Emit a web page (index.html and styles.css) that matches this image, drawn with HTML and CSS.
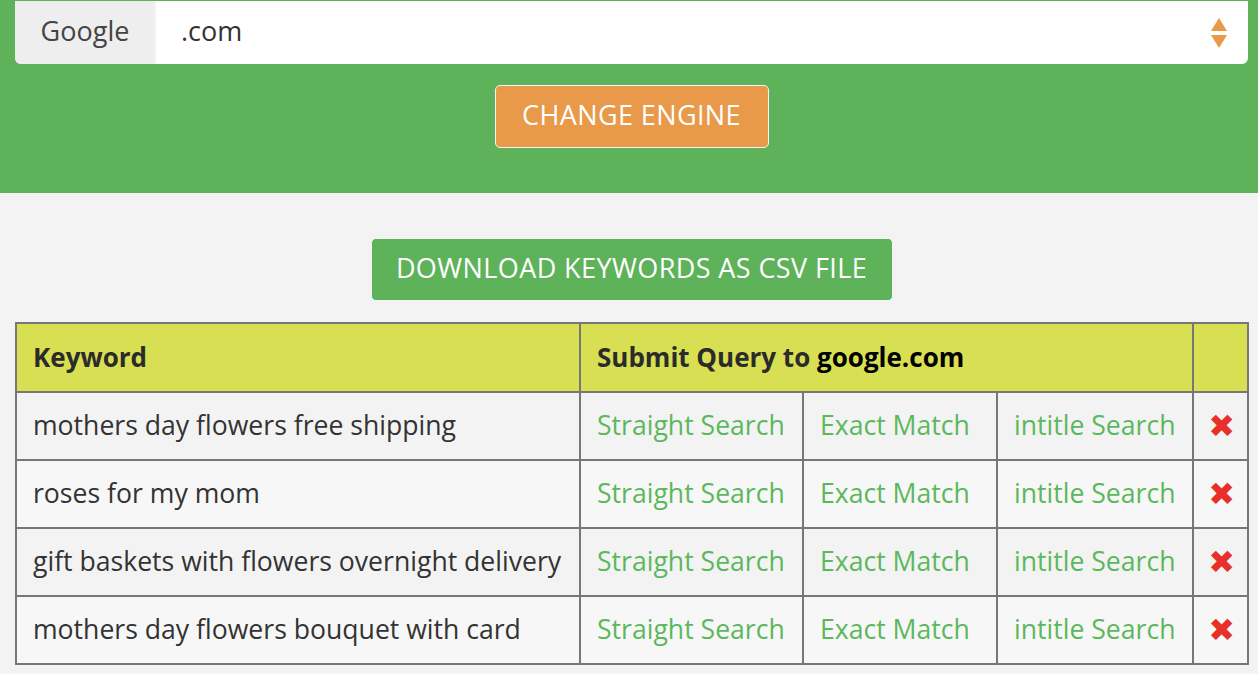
FILE: index.html
```html
<!DOCTYPE html>
<html>
<head>
<meta charset="utf-8">
<link rel="stylesheet" href="styles.css">
</head>
<body>
<header class="top">
  <div class="input-group">
    <span class="addon">Google</span>
    <div class="select">
      <span class="select-value">.com</span>
      <svg class="arrows" width="18" height="32" viewBox="0 0 18 32"><polygon points="9,1 17,14 1,14" fill="#e8994a"/><polygon points="1,18 17,18 9,31" fill="#e8994a"/></svg>
    </div>
  </div>
  <div class="center">
    <button class="btn btn-orange">CHANGE ENGINE</button>
  </div>
</header>
<main class="content">
  <div class="center">
    <button class="btn btn-green">DOWNLOAD KEYWORDS AS CSV FILE</button>
  </div>
  <table class="kw">
    <colgroup>
      <col class="c-kw">
      <col class="c-s">
      <col class="c-e">
      <col class="c-i">
      <col class="c-x">
    </colgroup>
    <thead>
      <tr>
        <th>Keyword</th>
        <th colspan="3">Submit Query to <span class="dark">google.com</span></th>
        <th></th>
      </tr>
    </thead>
    <tbody>
      <tr>
        <td>mothers day flowers free shipping</td>
        <td class="lnk">Straight Search</td>
        <td class="lnk">Exact Match</td>
        <td class="lnk">intitle Search</td>
        <td class="x">✖</td>
      </tr>
      <tr>
        <td>roses for my mom</td>
        <td class="lnk">Straight Search</td>
        <td class="lnk">Exact Match</td>
        <td class="lnk">intitle Search</td>
        <td class="x">✖</td>
      </tr>
      <tr>
        <td>gift baskets with flowers overnight delivery</td>
        <td class="lnk">Straight Search</td>
        <td class="lnk">Exact Match</td>
        <td class="lnk">intitle Search</td>
        <td class="x">✖</td>
      </tr>
      <tr>
        <td>mothers day flowers bouquet with card</td>
        <td class="lnk">Straight Search</td>
        <td class="lnk">Exact Match</td>
        <td class="lnk">intitle Search</td>
        <td class="x">✖</td>
      </tr>
    </tbody>
  </table>
</main>
</body>
</html>
```

FILE: styles.css
```css
* { box-sizing: border-box; }
html, body { margin: 0; padding: 0; }
body {
  font-family: "Open Sans", "DejaVu Sans", sans-serif;
  color: #333;
  background: #f3f3f3;
  width: 1258px;
  height: 674px;
  overflow: hidden;
}
.top {
  background: #5db25a;
  height: 193px;
  padding: 1px 10px 0 15px;
}
.input-group {
  display: flex;
  height: 63px;
  background: #fff;
  border-radius: 0 0 6px 6px;
  overflow: hidden;
}
.addon {
  width: 142px;
  background: #eeeeee;
  display: flex;
  align-items: center;
  justify-content: center;
  font-size: 27px;
  color: #444;
  border-right: 2px solid #fafafa;
  padding-bottom: 5px;
}
.select {
  flex: 1;
  display: flex;
  align-items: center;
  justify-content: space-between;
  padding: 0 20px 0 24px;
  font-size: 27px;
  color: #333;
}
.select-value { padding-bottom: 5px; }
.arrows { display: block; }
.center {
  display: flex;
  justify-content: center;
}
.top .center { margin-top: 21px; }
.btn {
  font-family: inherit;
  font-size: 27px;
  letter-spacing: 0.4px;
  color: #fff;
  border: 1px solid #f4f4f4;
  border-radius: 5px;
  height: 63px;
  padding: 0 0 4px;
  cursor: pointer;
}
.btn-orange { background: #e8994a; width: 274px; }
.btn-green { background: #5db25a; width: 522px; }
.content { padding: 45px 10px 0 15px; }
.content .center { margin-bottom: 21px; }
.kw {
  width: 1233px;
  table-layout: fixed;
  border-collapse: collapse;
  border: 2px solid #777;
  font-size: 26.6px;
}
.c-kw { width: 564px; }
.c-s { width: 223px; }
.c-e { width: 194px; }
.c-i { width: 196px; }
.c-x { width: 55px; }
.kw th, .kw td {
  border: 2px solid #777;
  height: 68px;
  text-align: left;
  padding: 0 16px 2px;
  white-space: nowrap;
}
.kw thead th { height: 69px; }
.kw th {
  background: #d8df52;
  font-weight: 700;
  font-size: 26px;
  color: #2b2b2b;
}
.dark { color: #000; }
.kw tbody tr:nth-child(odd) td { background: #f3f3f3; }
.kw tbody tr:nth-child(even) td { background: #f7f7f7; }
.lnk { color: #5cb85c; }
.x {
  color: #e8302a;
  text-align: center !important;
  font-size: 32px;
  padding: 0 0 4px 2px !important;
}
```
